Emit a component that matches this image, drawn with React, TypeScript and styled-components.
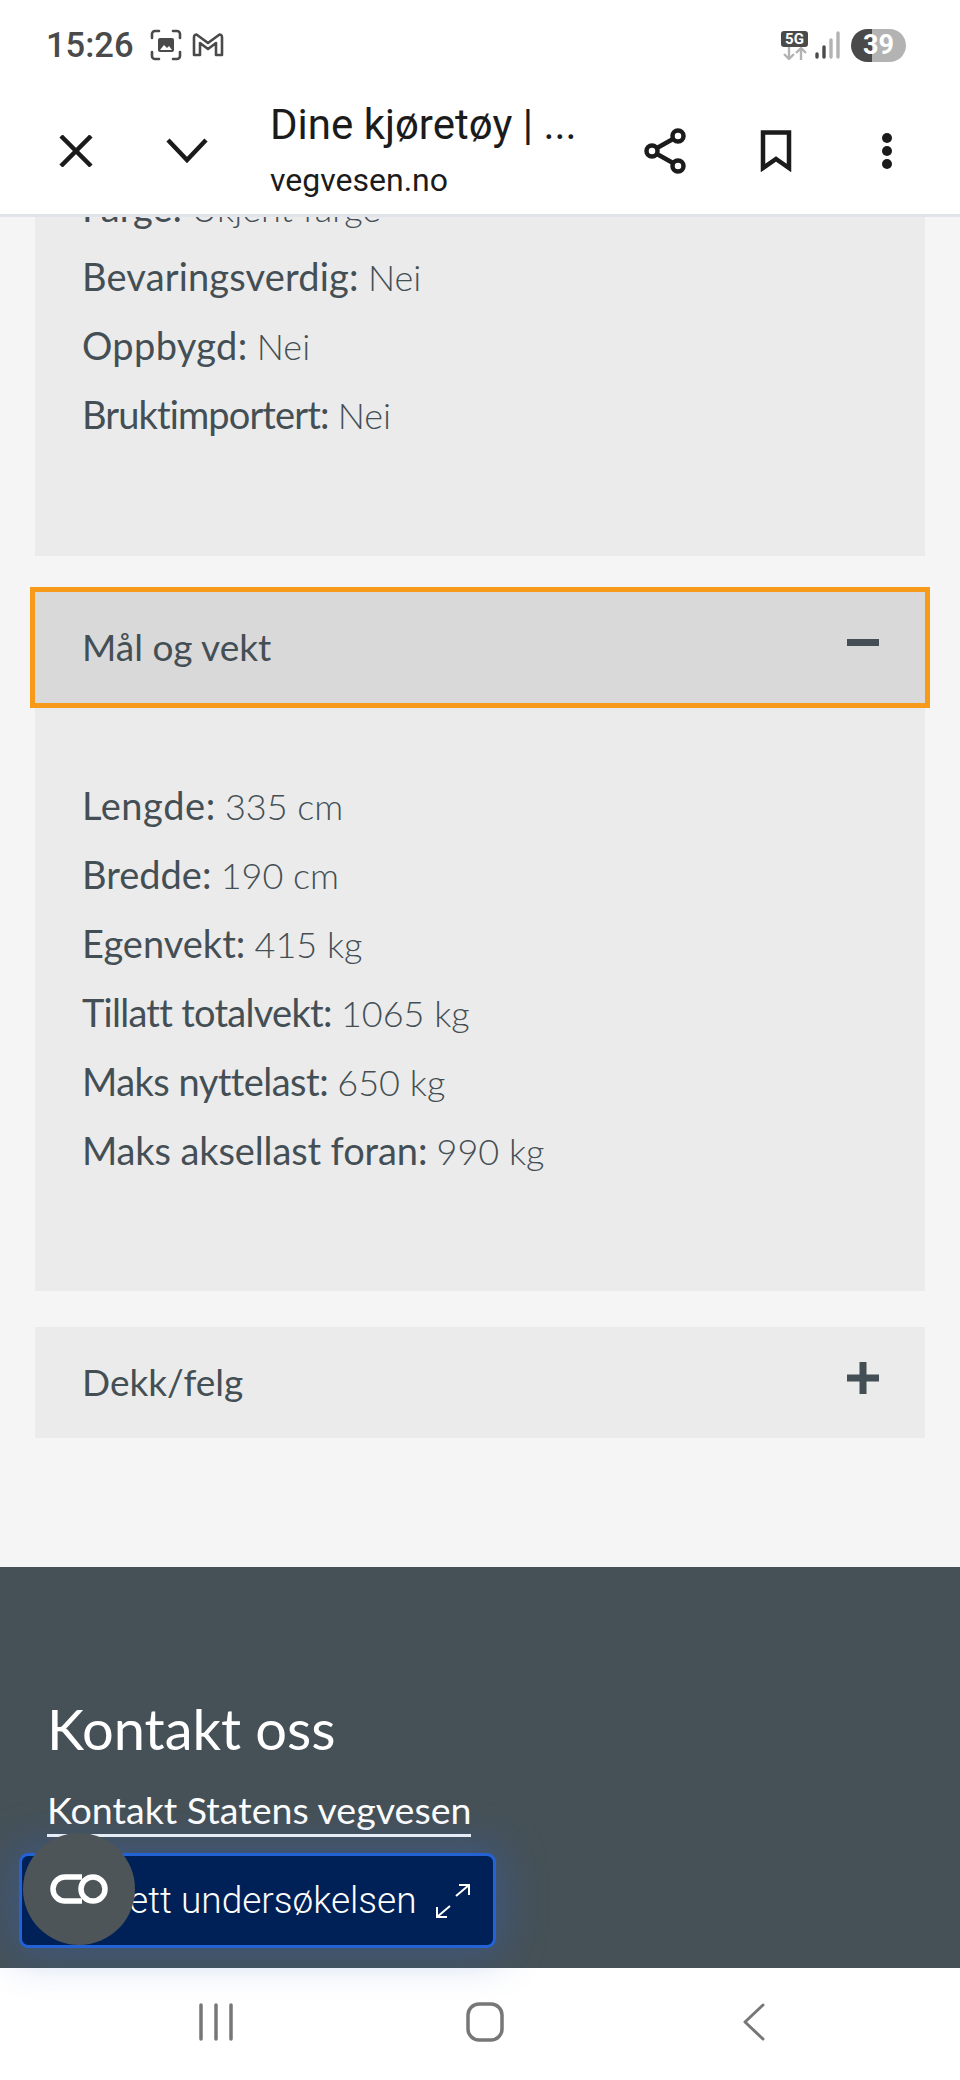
import React from 'react'
import styled, {createGlobalStyle} from 'styled-components'

const GlobalStyle = createGlobalStyle`
  html, body {
    margin: 0;
    padding: 0;
    background: #fff;
  }
  * {
    box-sizing: border-box;
  }
`

const Screen = styled.div`
  position: relative;
  width: 960px;
  height: 2080px;
  overflow: hidden;
  display: flex;
  flex-direction: column;
  background: #fff;
  font-family: Lato, "Liberation Sans", sans-serif;
`

const StatusBar = styled.div`
  height: 90px;
  flex: none;
  display: flex;
  align-items: center;
  justify-content: space-between;
  padding: 0 54px 0 46px;
  color: #4a4a4a;
`

const StatusGroup = styled.div`
  display: flex;
  align-items: center;
`

const Time = styled.span`
  font-family: Roboto, sans-serif;
  font-size: 34.5px;
  font-weight: 500;
  margin-right: 16px;
`

const NetworkBadge = styled.div`
  display: flex;
  flex-direction: column;
  align-items: center;
  margin-right: 7px;
`

const FiveG = styled.span`
  width: 27px;
  height: 16px;
  border-radius: 3px;
  background: #4a4a4a;
  color: #fff;
  font-family: Roboto, sans-serif;
  font-size: 15px;
  font-weight: 700;
  line-height: 16px;
  text-align: center;
`

const Battery = styled.span`
  width: 55px;
  height: 33px;
  margin-left: 11px;
  border-radius: 17px;
  background: linear-gradient(90deg, #4a4a4a 38%, #b3b3b3 38%);
  color: #fff;
  font-family: Roboto, sans-serif;
  font-size: 27px;
  font-weight: 700;
  line-height: 33px;
  text-align: center;
`

const Toolbar = styled.div`
  height: 127px;
  flex: none;
  display: flex;
  align-items: center;
  padding: 0 18px 3px 20px;
  background: #fff;
  border-bottom: 3px solid #e1e4ea;
`

const ToolButton = styled.div`
  width: 111px;
  flex: none;
  display: flex;
  justify-content: center;
  align-items: center;
`

const TitleBlock = styled.div`
  flex: 1;
  min-width: 0;
  padding: 0 0 1px 28px;
  color: #1b1b1b;
  font-family: Roboto, sans-serif;
`

const PageTitle = styled.div`
  font-size: 42px;
  font-weight: 400;
  line-height: 50px;
  white-space: nowrap;
`

const PageHost = styled.div`
  font-size: 32px;
  line-height: 40px;
  margin-top: 10px;
`

const Content = styled.main`
  flex: 1;
  min-height: 0;
  overflow: hidden;
  background: #f5f5f5;
`

const Sections = styled.div`
  display: flex;
  flex-direction: column;
  gap: 36px;
  padding: 0 35px;
  margin-top: -43px;
`

const SectionBody = styled.div<{$top: number; $bottom: number}>`
  background: #ebebeb;
  padding: ${p => p.$top}px 47px ${p => p.$bottom}px;
`

const SectionHeader = styled.div<{$active?: boolean}>`
  height: 111px;
  display: flex;
  align-items: center;
  justify-content: space-between;
  padding: 0 46px 2px 47px;
  background: ${p => (p.$active ? '#d9d9d9' : '#ebebeb')};
  color: #444f55;
  font-size: 37px;
  outline: ${p => (p.$active ? '5px solid #f79a1a' : 'none')};
  svg {
    margin-bottom: 8px;
  }
`

const Line = styled.div`
  height: 69px;
  padding-bottom: 2px;
  line-height: 67px;
  font-size: 36px;
  color: #444f55;
  white-space: nowrap;
`

const Label = styled.span<{$tracking: number}>`
  font-size: 38px;
  font-weight: 400;
  letter-spacing: ${p => p.$tracking}px;
`

const Value = styled.span`
  font-weight: 300;
`

const Footer = styled.footer`
  margin-top: 129px;
  height: 402px;
  padding: 128px 47px 0;
  background: #465157;
  color: #fff;
`

const FooterTitle = styled.h2`
  margin: 0;
  font-size: 56px;
  font-weight: 400;
  line-height: 68px;
`

const FooterLink = styled.a`
  display: inline-block;
  margin-top: 24px;
  padding-bottom: 1px;
  font-size: 37.6px;
  line-height: 46px;
  color: #fff;
  border-bottom: 3px solid #fff;
`

const SurveyButton = styled.div`
  position: absolute;
  left: 19px;
  top: 1853px;
  width: 477px;
  height: 95px;
  display: flex;
  align-items: center;
  justify-content: space-between;
  padding: 0 22px 0 107px;
  border: 3px solid #2463d6;
  border-radius: 9px;
  background: #002157;
  color: #fff;
  font-family: Roboto, sans-serif;
  font-size: 37px;
  font-weight: 300;
  box-shadow: 0 0 40px 8px rgba(50, 100, 190, 0.38);
`

const FloatingBubble = styled.div`
  position: absolute;
  left: 23px;
  top: 1833px;
  width: 112px;
  height: 112px;
  border-radius: 50%;
  background: #4d5558;
  display: flex;
  align-items: center;
  justify-content: center;
`

const NavBar = styled.nav`
  height: 112px;
  flex: none;
  display: grid;
  grid-template-columns: repeat(3, 269px);
  justify-content: center;
  align-items: center;
  justify-items: center;
  padding: 0 0 5px 10px;
  background: #fff;
`

type Row = [string, string, number]

const details: Row[] = [
    ['Farge', 'Ukjent farge', 0],
    ['Bevaringsverdig', 'Nei', 0.17],
    ['Oppbygd', 'Nei', 0.33],
    ['Bruktimportert', 'Nei', -0.88],
]

const measures: Row[] = [
    ['Lengde', '335 cm', 0.57],
    ['Bredde', '190 cm', 0],
    ['Egenvekt', '415 kg', 0],
    ['Tillatt totalvekt', '1065 kg', -0.73],
    ['Maks nyttelast', '650 kg', -0.53],
    ['Maks aksellast foran', '990 kg', -0.12],
]

const Rows = ({rows}: {rows: Row[]}) => (
    <>
        {rows.map(([label, value, tracking]) => (
            <Line key={label}><Label $tracking={tracking}>{label}:</Label> <Value>{value}</Value></Line>
        ))}
    </>
)

const App = () => {
    return (
        <Screen>
            <GlobalStyle/>
            <StatusBar>
                <StatusGroup>
                    <Time>15:26</Time>
                    <svg width="32" height="32" viewBox="0 0 32 32" fill="none" stroke="#4a4a4a" strokeWidth="2.6" strokeLinecap="round">
                        <path d="M2 9V5a3 3 0 0 1 3-3h4M23 2h4a3 3 0 0 1 3 3v4M30 23v4a3 3 0 0 1-3 3h-4M9 30H5a3 3 0 0 1-3-3v-4"/>
                        <rect x="8" y="9" width="16" height="14" rx="2" fill="#4a4a4a" stroke="none"/>
                        <path d="M10 21l4-5 3 3 2-2 3 4z" fill="#fff" stroke="none"/>
                    </svg>
                    <svg style={{marginLeft: 10}} width="32" height="24" viewBox="0 0 32 24" fill="none" stroke="#4a4a4a" strokeWidth="2.6" strokeLinejoin="round">
                        <path d="M2 22V4c0-2 2-3 3.500-1.800L16 10l10.500-7.800C28 1 30 2 30 4v18h-6V10l-8 6-8-6v12z"/>
                    </svg>
                </StatusGroup>
                <StatusGroup>
                    <NetworkBadge>
                        <FiveG>5G</FiveG>
                        <svg width="26" height="13" viewBox="0 0 26 13" fill="none" stroke="#b3b3b3" strokeWidth="2.4">
                            <path d="M7 0v12M2 7l5 5 5-5M19 13V1M14 6l5-5 5 5"/>
                        </svg>
                    </NetworkBadge>
                    <svg width="25" height="28" viewBox="0 0 25 28" fill="none" strokeWidth="3.400" strokeLinecap="round">
                        <path d="M2 26v-3" stroke="#4a4a4a"/>
                        <path d="M9 26V16" stroke="#4a4a4a"/>
                        <path d="M16 26V9" stroke="#b3b3b3"/>
                        <path d="M23 26V2" stroke="#b3b3b3"/>
                    </svg>
                    <Battery>39</Battery>
                </StatusGroup>
            </StatusBar>

            <Toolbar>
                <ToolButton>
                    <svg width="34" height="32" viewBox="0 0 34 32" fill="none" stroke="#1b1b1b" strokeWidth="4.500">
                        <path d="M2 1l30 30M32 1L2 31"/>
                    </svg>
                </ToolButton>
                <ToolButton>
                    <svg width="42" height="25" viewBox="0 0 42 25" fill="none" stroke="#1b1b1b" strokeWidth="4.500">
                        <path d="M2 2l19 20L40 2"/>
                    </svg>
                </ToolButton>
                <TitleBlock>
                    <PageTitle>Dine kjøretøy | ...</PageTitle>
                    <PageHost>vegvesen.no</PageHost>
                </TitleBlock>
                <ToolButton>
                    <svg width="42" height="46" viewBox="0 0 42 46" fill="none" stroke="#1b1b1b" strokeWidth="4.500">
                        <circle cx="34" cy="8" r="5.500"/>
                        <circle cx="34" cy="38" r="5.500"/>
                        <circle cx="8" cy="23" r="5.500"/>
                        <path d="M13 20l16-9M13 26l16 9"/>
                    </svg>
                </ToolButton>
                <ToolButton>
                    <svg width="32" height="42" viewBox="0 0 32 42" fill="none" stroke="#1b1b1b" strokeWidth="4.500">
                        <path d="M3 2.500h26V38L16 29 3 38z"/>
                    </svg>
                </ToolButton>
                <ToolButton>
                    <svg width="12" height="36" viewBox="0 0 12 36" fill="#1b1b1b">
                        <circle cx="6" cy="5" r="5"/>
                        <circle cx="6" cy="18" r="5"/>
                        <circle cx="6" cy="31" r="5"/>
                    </svg>
                </ToolButton>
            </Toolbar>

            <Content>
                <Sections>
                    <SectionBody $top={0} $bottom={106}>
                        <Rows rows={details}/>
                    </SectionBody>
                    <div>
                        <SectionHeader $active>
                            Mål og vekt
                            <svg width="32" height="7" viewBox="0 0 32 7" fill="#444f55"><rect width="32" height="7"/></svg>
                        </SectionHeader>
                        <SectionBody $top={69} $bottom={105}>
                            <Rows rows={measures}/>
                        </SectionBody>
                    </div>
                    <SectionHeader>
                        Dekk/felg
                        <svg width="32" height="32" viewBox="0 0 32 32" fill="#444f55"><path d="M0 12.500h32v7H0zM12.500 0h7v32h-7z"/></svg>
                    </SectionHeader>
                </Sections>
                <Footer>
                    <FooterTitle>Kontakt oss</FooterTitle>
                    <FooterLink>Kontakt Statens vegvesen</FooterLink>
                </Footer>
            </Content>

            <SurveyButton>
                ett undersøkelsen
                <svg width="36" height="34" viewBox="0 0 36 34" fill="none" stroke="#fff" strokeWidth="2">
                    <path d="M21 12L34 1M24 1h10v10M15 22L2 33M2 23v10h10"/>
                </svg>
            </SurveyButton>
            <FloatingBubble>
                <svg width="58" height="30" viewBox="0 0 58 30" fill="none" stroke="#fff" strokeWidth="5.500">
                    <path d="M32 3H15a12 12 0 0 0 0 24h17"/>
                    <circle cx="43" cy="15" r="12"/>
                </svg>
            </FloatingBubble>

            <NavBar>
                <svg width="36" height="38" viewBox="0 0 36 38" fill="none" stroke="#777" strokeWidth="3.500" strokeLinecap="round">
                    <path d="M3 2v34M18 2v34M33 2v34"/>
                </svg>
                <svg width="38" height="40" viewBox="0 0 38 40" fill="none" stroke="#777" strokeWidth="3.500">
                    <rect x="2" y="2" width="34" height="36" rx="11"/>
                </svg>
                <svg width="24" height="38" viewBox="0 0 24 38" fill="none" stroke="#777" strokeWidth="3" strokeLinecap="round" strokeLinejoin="round">
                    <path d="M21 2L3 19l18 17"/>
                </svg>
            </NavBar>
        </Screen>
    )
}

export default App
